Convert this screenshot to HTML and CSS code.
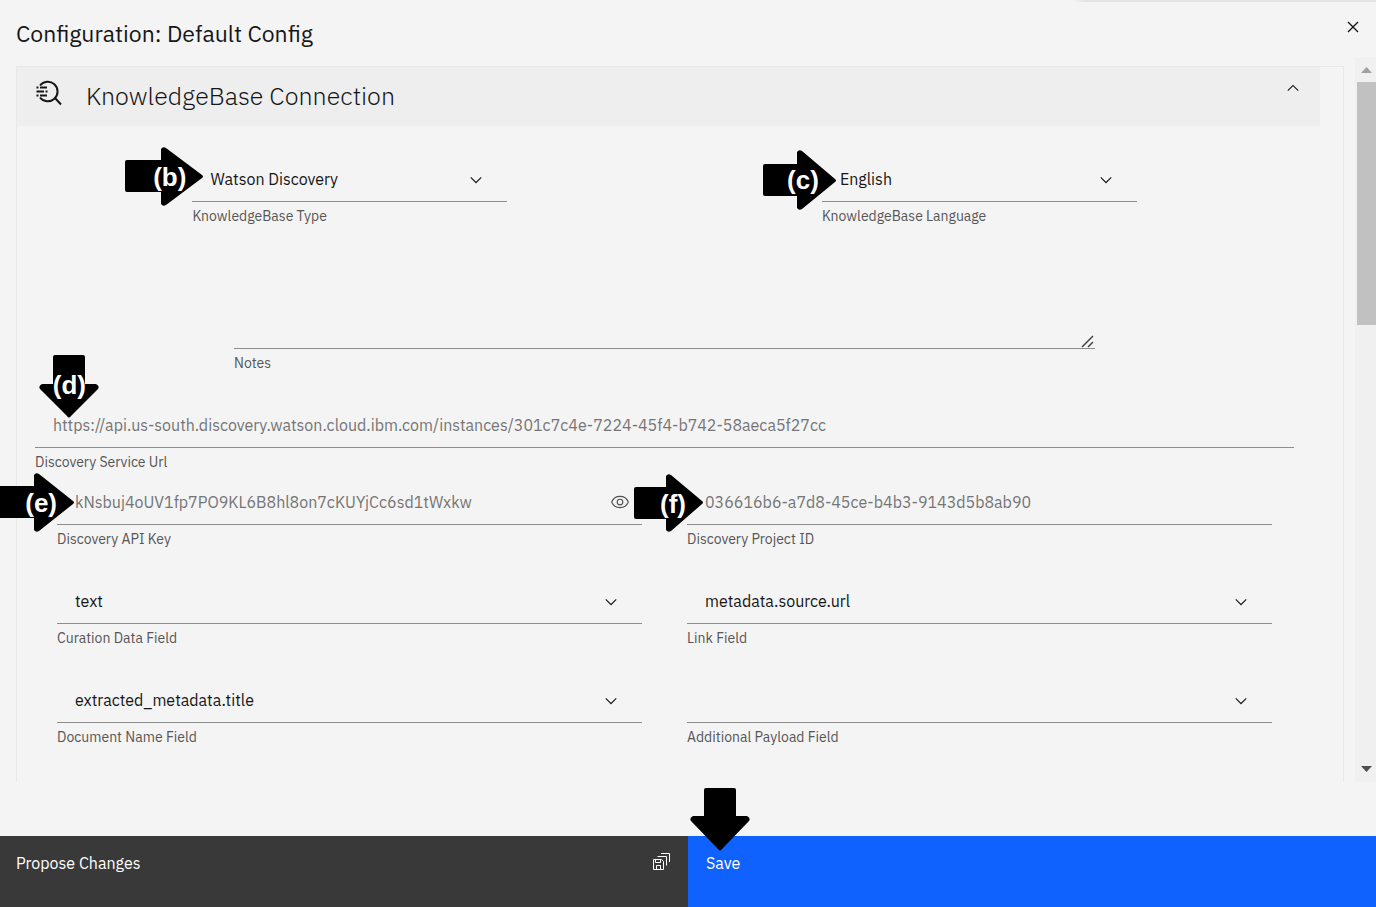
FILE: index.html
```
<!DOCTYPE html>
<html lang="en">
<head>
<meta charset="utf-8">
<title>Configuration: Default Config</title>
<link rel="stylesheet" href="styles.css">
</head>
<body>
<svg class="defs" aria-hidden="true">
  <symbol id="chevron" viewBox="0 0 16 16"><path d="M8 11 3 6l.7-.7L8 9.6l4.3-4.3.7.7z"/></symbol>
</svg>
<div class="dialog" role="dialog" aria-labelledby="dialog-title">
  <header class="dialog-header">
    <h1 class="dialog-title" id="dialog-title">Configuration: Default Config</h1>
    <button class="icon-button" type="button" aria-label="Close">
      <svg width="22" height="22" viewBox="0 0 32 32"><path d="M24 9.4 22.6 8 16 14.6 9.4 8 8 9.4l6.6 6.6L8 22.6 9.4 24l6.6-6.6 6.6 6.6 1.4-1.4-6.6-6.6z"/></svg>
    </button>
  </header>

  <main class="dialog-body">
    <section class="panel">
      <h2 class="panel-header">
        <button class="panel-toggle" type="button" aria-expanded="true">
          <svg class="panel-icon" width="28" height="28" viewBox="0 0 28 28" fill="none" stroke="currentColor" stroke-width="2">
            <path d="M5 6.500A9.800 9.800 0 1 1 5 18.500M20 19l6 6.500"/>
            <path d="M1.500 8.500h2M5 8.500h7M1.500 12.500h7.500M10.500 12.500h2M1.500 16.500h2M5 16.500h7"/>
          </svg>
          <span class="panel-title">KnowledgeBase Connection</span>
          <svg class="panel-chevron" width="18" height="18"><use href="#chevron"/></svg>
        </button>
      </h2>

      <form class="fields">
        <div class="row row-narrow">
          <div class="field">
            <div class="control">
              <select class="input" id="kb-type"><option>Watson Discovery</option></select>
              <svg class="chevron" width="18" height="18"><use href="#chevron"/></svg>
            </div>
            <label class="label" for="kb-type">KnowledgeBase Type</label>
            <div class="pin pin-b">
              <svg width="79" height="59" viewBox="0 0 79 59"><path d="M2 13h34V2q2-3 5-1l36 27q2 1.500 0 3L41 58q-3 2-5-1V45H2q-2 0-2-2V15q0-2 2-2z"/></svg>
              <span class="pin-text">(b)</span>
            </div>
          </div>
          <div class="field">
            <div class="control">
              <select class="input" id="kb-language"><option>English</option></select>
              <svg class="chevron" width="18" height="18"><use href="#chevron"/></svg>
            </div>
            <label class="label" for="kb-language">KnowledgeBase Language</label>
            <div class="pin pin-c">
              <svg width="74" height="60" viewBox="0 0 74 60"><path d="M2 14h32V2q2-3 5-1l33 28q2 1.500 0 3L39 59q-3 2-5-1V46H2q-2 0-2-2V16q0-2 2-2z"/></svg>
              <span class="pin-text">(c)</span>
            </div>
          </div>
        </div>

        <div class="field field-notes">
          <div class="control">
            <textarea class="input input-area" id="notes"></textarea>
            <svg class="grip" width="13" height="13" viewBox="0 0 13 13" fill="none" stroke="currentColor" stroke-width="1.500"><path d="M1 12 12 1M7 12l5-5"/></svg>
          </div>
          <label class="label" for="notes">Notes</label>
        </div>

        <div class="field">
          <input class="input input-muted" id="service-url" type="text" value="https://api.us-south.discovery.watson.cloud.ibm.com/instances/301c7c4e-7224-45f4-b742-58aeca5f27cc">
          <label class="label" for="service-url">Discovery Service Url</label>
          <div class="pin pin-d">
            <svg width="60" height="63" viewBox="0 0 60 63"><path d="M16 0h28q2 0 2 2v27h11q4 2 2 5L32 61q-2 3-4 0L1 34q-2-3 2-5h11V2q0-2 2-2z"/></svg>
            <span class="pin-text">(d)</span>
          </div>
        </div>

        <div class="row row-tight">
          <div class="field">
            <div class="control">
              <input class="input input-muted" id="api-key" type="text" value="kNsbuj4oUV1fp7PO9KL6B8hl8on7cKUYjCc6sd1tWxkw">
              <button class="eye" type="button" aria-label="Hide key">
                <svg width="18" height="18" viewBox="0 0 16 16" fill="none" stroke="currentColor"><path d="M.6 8C2 4.600 4.800 3 8 3s6 1.600 7.400 5C14 11.400 11.200 13 8 13S2 11.400.6 8z"/><circle cx="8" cy="8" r="2.500"/></svg>
              </button>
            </div>
            <label class="label" for="api-key">Discovery API Key</label>
            <div class="pin pin-e">
              <svg width="75" height="59" viewBox="0 0 75 59"><path d="M0 13h34V2q2-3 5-1l34 27q2 1.500 0 3L39 58q-3 2-5-1V45H0z"/></svg>
              <span class="pin-text">(e)</span>
            </div>
          </div>
          <div class="field">
            <input class="input input-muted" id="project-id" type="text" value="036616b6-a7d8-45ce-b4b3-9143d5b8ab90">
            <label class="label" for="project-id">Discovery Project ID</label>
            <div class="pin pin-f">
              <svg width="70" height="58" viewBox="0 0 70 58"><path d="M2 13h30V2q2-3 5-1l31 26q2 1.500 0 3L37 57q-3 2-5-1V45H2q-2 0-2-2V15q0-2 2-2z"/></svg>
              <span class="pin-text">(f)</span>
            </div>
          </div>
        </div>

        <div class="row">
          <div class="field">
            <div class="control">
              <select class="input" id="curation"><option>text</option></select>
              <svg class="chevron" width="18" height="18"><use href="#chevron"/></svg>
            </div>
            <label class="label" for="curation">Curation Data Field</label>
          </div>
          <div class="field">
            <div class="control">
              <select class="input" id="link"><option>metadata.source.url</option></select>
              <svg class="chevron" width="18" height="18"><use href="#chevron"/></svg>
            </div>
            <label class="label" for="link">Link Field</label>
          </div>
        </div>

        <div class="row">
          <div class="field">
            <div class="control">
              <select class="input" id="doc-name"><option>extracted_metadata.title</option></select>
              <svg class="chevron" width="18" height="18"><use href="#chevron"/></svg>
            </div>
            <label class="label" for="doc-name">Document Name Field</label>
          </div>
          <div class="field">
            <div class="control">
              <select class="input" id="payload"><option></option></select>
              <svg class="chevron" width="18" height="18"><use href="#chevron"/></svg>
            </div>
            <label class="label" for="payload">Additional Payload Field</label>
          </div>
        </div>
      </form>
    </section>

    <div class="scrollbar" aria-hidden="true">
      <svg class="scroll-up" width="11" height="6" viewBox="0 0 11 6"><path d="M0 6 5.500 0 11 6z"/></svg>
      <div class="scroll-track"><div class="scroll-thumb"></div></div>
      <svg class="scroll-down" width="11" height="6" viewBox="0 0 11 6"><path d="M0 0h11L5.500 6z"/></svg>
    </div>
  </main>

  <footer class="dialog-footer">
    <button class="action action-secondary" type="button">
      <span>Propose Changes</span>
      <svg width="18" height="18" viewBox="0 0 18 18" fill="none" stroke="currentColor"><path d="M1.500 6.500h8l2 2v8h-10zM3.500 6.500v3h5v-3M4.500 16.500v-4h4v4M5.500 3.500h9v9M9 .5h8.500v8.500"/></svg>
    </button>
    <button class="action action-primary" type="button">
      <span>Save</span>
      <svg class="pin pin-save" width="60" height="63" viewBox="0 0 60 63"><path d="M16 0h28q2 0 2 2v26h11q4 2 2 5L32 61q-2 3-4 0L1 33q-2-3 2-5h11V2q0-2 2-2z"/></svg>
    </button>
  </footer>
</div>
</body>
</html>
```
FILE: styles.css
```
* { box-sizing: border-box; }
body {
  margin: 0;
  background: #f4f4f4;
  color: #161616;
  font-family: "IBM Plex Sans", Roboto, "Liberation Sans", sans-serif;
  font-size: 16px;
}
button, input, select, textarea { font: inherit; color: inherit; }
h1, h2 { margin: 0; font-weight: 400; }
svg { display: block; fill: currentColor; }
svg[fill="none"] { fill: none; }
.defs { position: absolute; width: 0; height: 0; }

.dialog {
  position: relative;
  display: flex;
  flex-direction: column;
  height: 100vh;
  min-height: 600px;
}
.dialog::before {
  content: "";
  position: absolute;
  top: 0;
  right: 0;
  width: 22%;
  height: 2px;
  background: linear-gradient(90deg, #f4f4f4, #e4e4e4 12px);
}
.dialog-header {
  display: flex;
  justify-content: space-between;
  align-items: flex-start;
  padding: 16px 12px 0 16px;
  height: 57px;
}
.dialog-title { font-size: 23px; line-height: 34px; }
.icon-button { padding: 0; border: 0; background: none; }

.dialog-body {
  flex: 1;
  min-height: 0;
  display: flex;
  overflow: hidden;
  margin-bottom: 54px;
}
.panel {
  flex: 1;
  min-width: 0;
  margin: 9px 11px 0 16px;
  padding-right: 23px;
  border: 1px solid #e8e8e8;
  border-bottom: 0;
}
.panel-header { background: #eee; }
.panel-toggle {
  display: flex;
  width: 100%;
  height: 59px;
  padding: 12px 18px;
  border: 0;
  background: none;
  text-align: left;
}
.panel-title {
  flex: 1;
  padding-left: 23px;
  font-size: 25px;
  font-weight: 300;
  line-height: 34px;
}
.panel-chevron { transform: rotate(180deg); }

.fields {
  display: flex;
  flex-direction: column;
  gap: 32px;
  padding: 32px 26px 32px 18px;
}
.row {
  display: grid;
  grid-template-columns: 1fr 1fr;
  gap: 45px;
  padding: 0 22px;
}
.row-narrow { gap: 0; padding: 0; }
.row-narrow .field { width: 50%; justify-self: center; }
.row-tight { margin-top: -22px; }
.field { position: relative; }
.field-notes { width: 861px; max-width: 100%; align-self: center; }
.control { position: relative; }
.input {
  display: block;
  width: 100%;
  height: 44px;
  padding: 0 18px 1px;
  border: 0;
  border-bottom: 1px solid #8d8d8d;
  border-radius: 0;
  background: none;
  appearance: none;
  outline: 0;
}
.input-muted { color: #757575; }
.input-area { height: 92px; resize: none; }
.label {
  display: block;
  margin-top: 5px;
  font-size: 14px;
  line-height: 18px;
  color: #565656;
}
.chevron { position: absolute; right: 22px; top: 13px; pointer-events: none; }
.grip { position: absolute; right: 1px; bottom: 1px; color: #444; }
.eye {
  position: absolute;
  right: 13px;
  top: 12px;
  padding: 0;
  border: 0;
  background: none;
  color: #525252;
}

.pin { position: absolute; color: #000; pointer-events: none; }
.pin-text {
  position: absolute;
  top: 15px;
  right: 18px;
  color: #fff;
  font: bold 26px/30px "Liberation Sans", Arial, sans-serif;
}
.pin-b { left: -67px; top: -11px; }
.pin-c { left: -59px; top: -8px; }
.pin-d { left: 4px; top: -49px; }
.pin-d .pin-text { right: 13px; }
.pin-e { left: -57px; top: -8px; }
.pin-f { left: -53px; top: -7px; }
.pin-save { left: 2px; top: -48px; }

.scrollbar {
  display: flex;
  flex-direction: column;
  align-items: center;
  gap: 9px;
  width: 21px;
  padding: 10px 0 10px 2px;
  background: #f0f0f0;
}
.scroll-up { color: #a0a0a0; }
.scroll-down { color: #505050; }
.scroll-track { flex: 1; align-self: stretch; }
.scroll-thumb { width: 100%; height: 36%; background: #c1c1c1; }

.dialog-footer {
  display: grid;
  grid-template-columns: 1fr 1fr;
  height: 71px;
}
.action {
  position: relative;
  display: flex;
  justify-content: space-between;
  align-items: flex-start;
  padding: 17px 18px;
  border: 0;
  color: #fff;
  text-align: left;
}
.action-secondary { padding-left: 16px; background: #393939; }
.action-primary { background: #0f62fe; }
```
